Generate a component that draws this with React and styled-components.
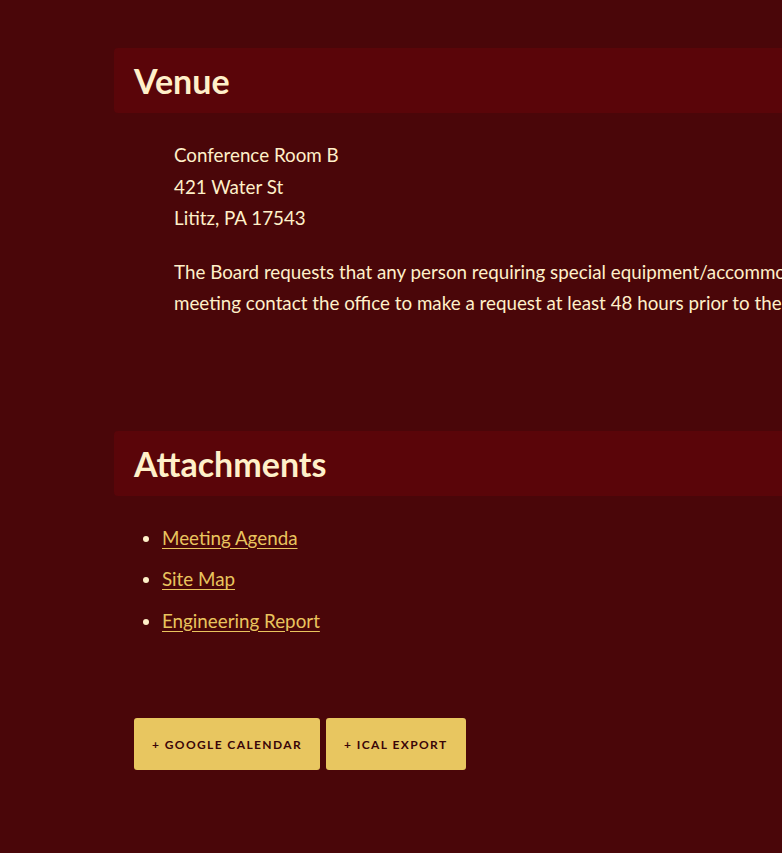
import styled, { createGlobalStyle } from "styled-components";

const GlobalStyle = createGlobalStyle`
  html, body {
    margin: 0;
    background: #4a0609;
    overflow: hidden;
  }
  body {
    font-family: Lato, "Open Sans", sans-serif;
    color: #fff0c9;
  }
`;

const App = () => {
  return (
    <>
      <GlobalStyle />
      <Page>
        <Section>
          <SectionHeader>Venue</SectionHeader>
          <Body>
            <Text>
              Conference Room B<br />
              421 Water St<br />
              Lititz, PA 17543
            </Text>
            <Notice>
              The Board requests that any person requiring special equipment/accommodations to attend the
              meeting contact the office to make a request at least 48 hours prior to the meeting.
            </Notice>
          </Body>
        </Section>

        <Section $gap={112}>
          <SectionHeader>Attachments</SectionHeader>
          <Files>
            <File><FileLink href="#">Meeting Agenda</FileLink></File>
            <File><FileLink href="#">Site Map</FileLink></File>
            <File><FileLink href="#">Engineering Report</FileLink></File>
          </Files>
        </Section>

        <Actions>
          <Button>+ Google Calendar</Button>
          <Button>+ iCal Export</Button>
        </Actions>
      </Page>
    </>
  );
};

const Page = styled.main`
  width: 1000px;
  padding: 48px 0 60px 114px;
`;

const Section = styled.section`
  margin-top: ${(p) => p.$gap || 0}px;
`;

const SectionHeader = styled.h2`
  margin: 0;
  height: 65px;
  line-height: 65px;
  padding: 0 20px;
  background: #5a0509;
  border-radius: 4px;
  font-size: 34px;
  font-weight: 700;
  color: #fff0c9;
`;

const Body = styled.div`
  padding: 26px 0 0 60px;
  width: 820px;
`;

const Text = styled.p`
  margin: 0;
  font-size: 18.8px;
  line-height: 31.5px;
`;

const Notice = styled(Text)`
  margin-top: 22px;
`;

const Files = styled.ul`
  margin: 26px 0 0;
  padding-left: 48px;
  font-size: 18.8px;
  line-height: 31.5px;
`;

const File = styled.li`
  margin-bottom: 10px;
  color: #fff0c9;
`;

const FileLink = styled.a`
  color: #e9c45e;
  text-decoration: underline;
  text-underline-offset: 3px;
`;

const Actions = styled.div`
  display: flex;
  gap: 6px;
  margin: 82px 0 0 20px;
`;

const Button = styled.button`
  height: 52px;
  padding: 0 18px;
  border: none;
  border-radius: 3px;
  background: #e8c660;
  color: #3a0508;
  font-family: Lato, sans-serif;
  font-size: 12px;
  font-weight: 700;
  letter-spacing: 1.4px;
  text-transform: uppercase;
  cursor: pointer;
`;

export default App;
